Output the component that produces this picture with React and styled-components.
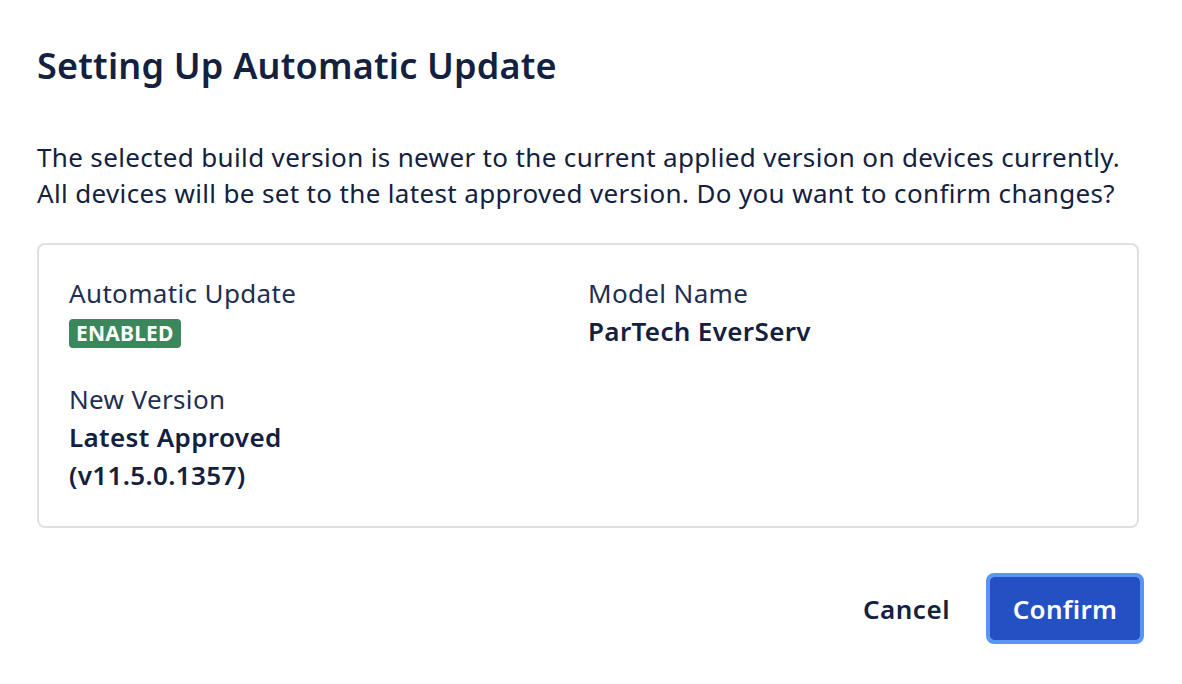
import React from "react";
import styled, { createGlobalStyle } from "styled-components";

const GlobalStyle = createGlobalStyle`
  body {
    margin: 0;
    background: #ffffff;
    font-family: "Noto Sans", "Open Sans", sans-serif;
    color: #13213f;
  }
`;

const details = [
  { id: 1, label: "Automatic Update", badge: "ENABLED" },
  { id: 2, label: "Model Name", value: ["ParTech EverServ"] },
  { id: 3, label: "New Version", value: ["Latest Approved", "(v11.5.0.1357)"] },
];

const App = () => {
  return (
    <>
      <GlobalStyle />
      <Dialog>
        <Title>Setting Up Automatic Update</Title>
        <Message>
          The selected build version is newer to the current applied version on devices currently.
          <br />
          All devices will be set to the latest approved version. Do you want to confirm changes?
        </Message>
        <Card>
          {details.map((item) => (
            <Field key={item.id}>
              <Label>{item.label}</Label>
              {item.badge && <Badge>{item.badge}</Badge>}
              {item.value &&
                item.value.map((line) => <Value key={line}>{line}</Value>)}
            </Field>
          ))}
        </Card>
        <Actions>
          <TextButton>Cancel</TextButton>
          <PrimaryButton>Confirm</PrimaryButton>
        </Actions>
      </Dialog>
    </>
  );
};

const Dialog = styled.div`
  width: 1182px;
  box-sizing: border-box;
  padding: 44px 38px 0 37px;
`;

const Title = styled.h1`
  margin: 0;
  font-size: 36px;
  line-height: 44px;
  font-weight: 600;
  letter-spacing: 0.2px;
  color: #13213f;
`;

const Message = styled.p`
  margin: 51px 0 0;
  font-size: 26px;
  line-height: 36px;
  letter-spacing: 0.35px;
  white-space: nowrap;
  color: #13213f;
`;

const Card = styled.div`
  margin-top: 32px;
  width: 1102px;
  box-sizing: border-box;
  border: 2px solid #dfe0e6;
  border-radius: 8px;
  padding: 29px 30px 32px;
  display: grid;
  grid-template-columns: 1fr 1fr;
  row-gap: 30px;
`;

const Field = styled.div`
  display: flex;
  flex-direction: column;
  align-items: flex-start;
`;

const Label = styled.div`
  font-size: 26px;
  line-height: 38px;
  letter-spacing: 0.35px;
  color: #1f2e52;
`;

const Value = styled.div`
  font-size: 26px;
  line-height: 38px;
  font-weight: 600;
  letter-spacing: 0.35px;
  color: #13213f;
`;

const Badge = styled.span`
  margin: 7px 0 2px;
  background: #3b865a;
  color: #ffffff;
  font-size: 21px;
  font-weight: 700;
  line-height: 29px;
  padding: 0 7px;
  border-radius: 4px;
  letter-spacing: 0.2px;
`;

const Actions = styled.div`
  margin-top: 45px;
  display: flex;
  justify-content: flex-end;
  align-items: center;
  gap: 36px;
  width: 1107px;
`;

const TextButton = styled.button`
  border: none;
  background: transparent;
  font-family: inherit;
  font-size: 26px;
  font-weight: 600;
  letter-spacing: 0.5px;
  color: #13213f;
  padding: 0;
`;

const PrimaryButton = styled.button`
  width: 158px;
  height: 71px;
  box-sizing: border-box;
  border: 4px solid #5b95f4;
  border-radius: 8px;
  background: #2351c4;
  background-clip: padding-box;
  color: #ffffff;
  font-family: inherit;
  font-size: 26px;
  font-weight: 600;
  letter-spacing: 0.3px;
`;

export default App;
